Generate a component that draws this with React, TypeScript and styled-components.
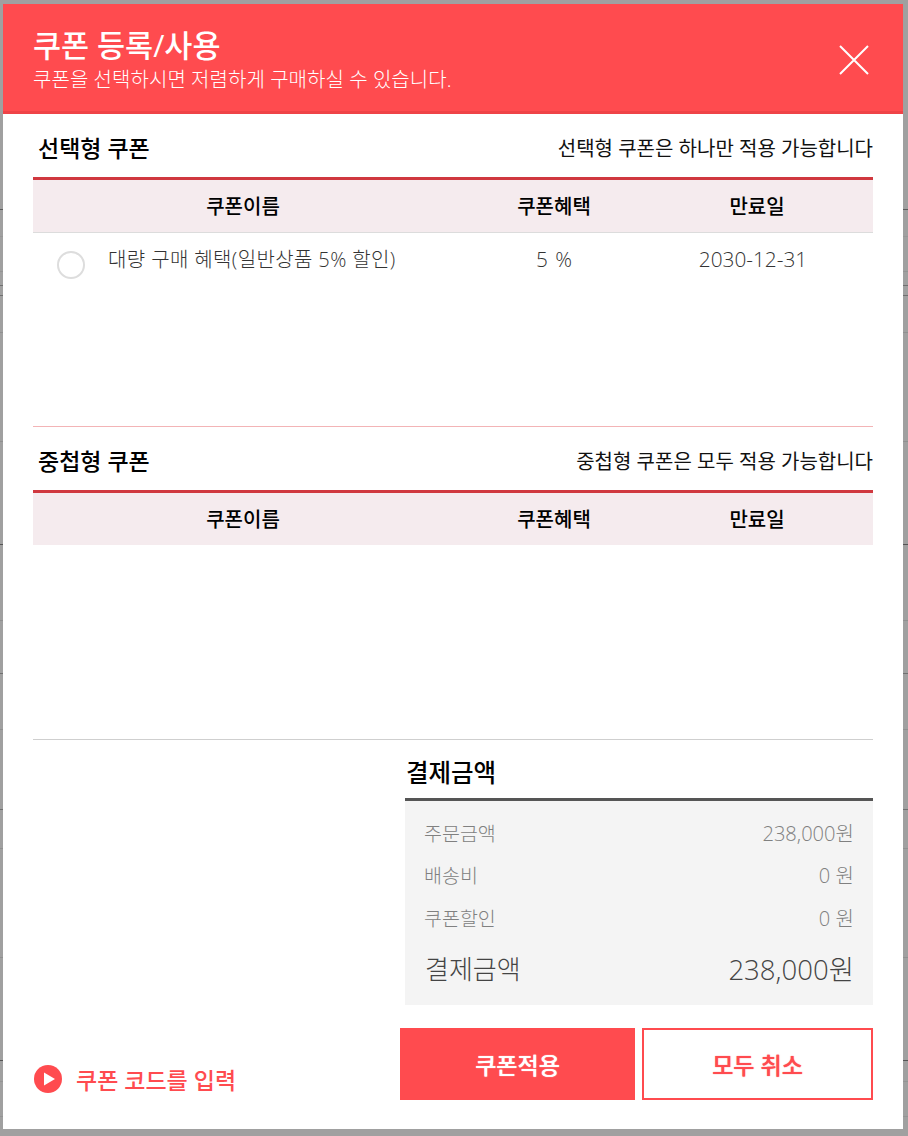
import React from 'react'
import styled, { createGlobalStyle } from 'styled-components'

// rows of the dimmed page that show in the gutters around the modal
const backdropLines: [number, string][] = [
    [209, '#5c5c5c'],
    [236, '#979797'],
    [271, '#949494'],
    [285, '#707070'],
    [295, '#707070'],
    [332, '#909090'],
    [441, '#909090'],
    [544, '#555555'],
    [620, '#909090'],
    [673, '#707070'],
    [729, '#909090'],
    [809, '#707070'],
    [848, '#909090'],
    [957, '#909090'],
    [1060, '#555555'],
    [1081, '#949494'],
    [1116, '#949494'],
]

const backdrop = backdropLines
    .map(([y, c]) => `linear-gradient(${c}, ${c}) 0 ${y}px / 100% 1px no-repeat`)
    .join(', ')

const Global = createGlobalStyle`
    html, body {
        margin: 0;
        padding: 0;
        background: #a0a0a0;
    }
    * {
        box-sizing: border-box;
    }
`

const Page = styled.div`
    width: 908px;
    height: 1136px;
    padding: 4px 5px 7px 3px;
    overflow: hidden;
    background: ${backdrop};
    font-family: "Open Sans", "Noto Sans CJK KR", "Noto Sans", sans-serif;
`

const Modal = styled.div`
    display: flex;
    flex-direction: column;
    width: 900px;
    height: 1125px;
    background: #fff;
`

const Header = styled.header`
    display: flex;
    align-items: center;
    justify-content: space-between;
    height: 110px;
    padding: 0 34px 0 30px;
    background: #ff4b4f;
    border-bottom: 3px solid #ef4347;
    color: #fff;
`

const HeaderTitle = styled.h1`
    margin: 2px 0 4px;
    font-size: 30.5px;
    line-height: 36px;
    font-weight: 500;
`

const HeaderSub = styled.p`
    margin: 0 0 -3px;
    font-size: 20px;
    line-height: 26px;
    font-weight: 300;
    letter-spacing: 0.05px;
`

const CloseButton = styled.button`
    display: block;
    width: 30px;
    height: 30px;
    margin-top: 5px;
    padding: 0;
    border: 0;
    background: none;
`

const Body = styled.div`
    display: flex;
    flex-direction: column;
    flex: 1;
    padding: 0 30px;
`

const CouponSection = styled.section<{ $height: number; $line: string }>`
    height: ${p => p.$height}px;
    border-bottom: 1px solid ${p => p.$line};
`

const SectionHead = styled.div`
    display: flex;
    align-items: center;
    justify-content: space-between;
    height: 63px;
    padding: 3px 0 0 5px;
`

const SectionTitle = styled.h2`
    margin: 0;
    font-size: 23px;
    font-weight: 500;
    color: #000;
`

const SectionNote = styled.span`
    font-size: 20px;
    font-weight: 400;
    color: #111;
`

const CouponRow = styled.div`
    display: grid;
    grid-template-columns: 420px 202px 218px;
    align-items: center;
`

const TableHead = styled(CouponRow)<{ $underline?: boolean }>`
    height: ${p => (p.$underline ? 56 : 55)}px;
    background: #f5ebee;
    border-top: 3px solid #d0383f;
    border-bottom: ${p => (p.$underline ? '1px solid #dcdcdc' : '0')};
`

const HeadCell = styled.div<{ $inset?: number }>`
    padding-right: ${p => p.$inset || 0}px;
    margin-top: -2px;
    font-size: 20px;
    font-weight: 500;
    text-align: center;
    color: #000;
`

const DataRow = styled(CouponRow)`
    height: 54px;
`

const NameCell = styled.label`
    display: flex;
    align-items: center;
    gap: 23px;
    margin-top: -3px;
    padding-left: 24px;
    font-size: 20px;
    font-weight: 300;
    letter-spacing: 0.38px;
    color: #333;
`

const Radio = styled.span`
    display: block;
    flex: none;
    width: 28px;
    height: 28px;
    margin: 6px 0 -6px;
    border: 2px solid #ddd;
    border-radius: 50%;
    background: #fff;
`

const DataCell = styled.div<{ $inset?: number }>`
    padding-right: ${p => p.$inset || 0}px;
    margin-top: -2px;
    font-size: 20.8px;
    font-weight: 300;
    word-spacing: 2px;
    text-align: center;
    color: #333;
`

const Bottom = styled.div`
    display: grid;
    grid-template-columns: 372px 468px;
    flex: 1;
`

const CodeLink = styled.a`
    display: flex;
    align-items: center;
    gap: 14px;
    align-self: end;
    height: 40px;
    margin-bottom: 30px;
    padding-left: 1px;
    font-size: 23px;
    font-weight: 500;
    color: #ff4b4f;
`

const Summary = styled.div`
    display: flex;
    flex-direction: column;
`

const SummaryTitle = styled.h2`
    display: flex;
    align-items: center;
    height: 58px;
    margin: 0;
    padding: 4px 0 0 1px;
    font-size: 24.5px;
    font-weight: 500;
    color: #000;
`

const SummaryBox = styled.div`
    height: 207px;
    padding: 10px 19px 0;
    background: #f4f4f4;
    border-top: 3px solid #555;
`

const SummaryRow = styled.div`
    display: flex;
    align-items: center;
    justify-content: space-between;
    height: 42.5px;
    font-size: 19.5px;
    font-weight: 300;
    color: #808080;
`

const TotalRow = styled(SummaryRow)`
    height: 58px;
    padding-left: 1px;
    font-size: 26px;
    color: #444;
`

const Amount = styled.span<{ $total?: boolean }>`
    font-size: ${p => (p.$total ? 1.06 : 1.03)}em;
`

const Buttons = styled.div`
    display: flex;
    gap: 7px;
    margin: 23px 0 0 -5px;
`

const ActionButton = styled.button<{ $primary?: boolean }>`
    height: 72px;
    width: ${p => (p.$primary ? 235 : 231)}px;
    border: 2px solid #ff4b4f;
    background: ${p => (p.$primary ? '#ff4b4f' : '#fff')};
    color: ${p => (p.$primary ? '#fff' : '#ff4b4f')};
    font-family: inherit;
    font-size: 23px;
    font-weight: 500;
    text-shadow: 0 0 1px ${p => (p.$primary ? '#fff' : '#ff4b4f')};
`

function Coupons() {
    return (
        <>
            <HeadCell>쿠폰이름</HeadCell>
            <HeadCell>쿠폰혜택</HeadCell>
            <HeadCell $inset={14}>만료일</HeadCell>
        </>
    )
}

export default function App() {
    return (
        <Page>
            <Global />
            <Modal>
                <Header>
                    <div>
                        <HeaderTitle>쿠폰 등록/사용</HeaderTitle>
                        <HeaderSub>쿠폰을 선택하시면 저렴하게 구매하실 수 있습니다.</HeaderSub>
                    </div>
                    <CloseButton aria-label="닫기">
                        <svg width="30" height="30" viewBox="0 0 30 30">
                            <path d="M1 1L29 29M29 1L1 29" stroke="#fff" strokeWidth="2" fill="none" />
                        </svg>
                    </CloseButton>
                </Header>
                <Body>
                    <CouponSection $height={313} $line="#f3b4b6">
                        <SectionHead>
                            <SectionTitle>선택형 쿠폰</SectionTitle>
                            <SectionNote>선택형 쿠폰은 하나만 적용 가능합니다</SectionNote>
                        </SectionHead>
                        <TableHead $underline>
                            <Coupons />
                        </TableHead>
                        <DataRow>
                            <NameCell>
                                <Radio />
                                대량 구매 혜택(일반상품 5% 할인)
                            </NameCell>
                            <DataCell>5 %</DataCell>
                            <DataCell $inset={22}>2030-12-31</DataCell>
                        </DataRow>
                    </CouponSection>
                    <CouponSection $height={313} $line="#cfcfcf">
                        <SectionHead>
                            <SectionTitle>중첩형 쿠폰</SectionTitle>
                            <SectionNote>중첩형 쿠폰은 모두 적용 가능합니다</SectionNote>
                        </SectionHead>
                        <TableHead>
                            <Coupons />
                        </TableHead>
                    </CouponSection>
                    <Bottom>
                        <CodeLink>
                            <svg width="28" height="28" viewBox="0 0 28 28">
                                <circle cx="14" cy="14" r="14" fill="#ff4b4f" />
                                <path d="M10 7.5L21 14L10 20.5Z" fill="#fff" />
                            </svg>
                            쿠폰 코드를 입력
                        </CodeLink>
                        <Summary>
                            <SummaryTitle>결제금액</SummaryTitle>
                            <SummaryBox>
                                <SummaryRow>
                                    <span>주문금액</span>
                                    <Amount>238,000원</Amount>
                                </SummaryRow>
                                <SummaryRow>
                                    <span>배송비</span>
                                    <Amount>0 원</Amount>
                                </SummaryRow>
                                <SummaryRow>
                                    <span>쿠폰할인</span>
                                    <Amount>0 원</Amount>
                                </SummaryRow>
                                <TotalRow>
                                    <span>결제금액</span>
                                    <Amount $total>238,000원</Amount>
                                </TotalRow>
                            </SummaryBox>
                            <Buttons>
                                <ActionButton $primary>쿠폰적용</ActionButton>
                                <ActionButton>모두 취소</ActionButton>
                            </Buttons>
                        </Summary>
                    </Bottom>
                </Body>
            </Modal>
        </Page>
    )
}
